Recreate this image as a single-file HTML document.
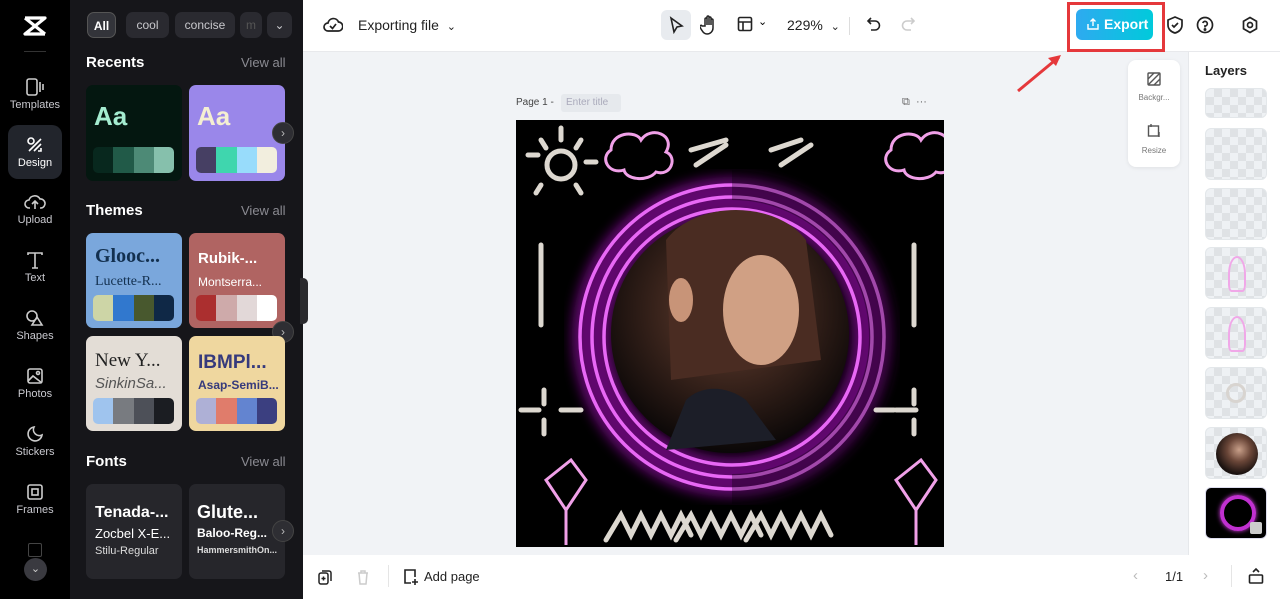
<!DOCTYPE html>
<html><head><meta charset="utf-8"><style>
*{box-sizing:border-box;margin:0;padding:0}
body{width:1280px;height:599px;overflow:hidden;font-family:"Liberation Sans",sans-serif;background:#f1f3f6;position:relative}
.abs{position:absolute}
.rail{left:0;top:0;width:70px;height:599px;background:#000}
.panel{left:70px;top:0;width:233px;height:599px;background:#16161a}
.ri{position:absolute;left:0;width:70px;text-align:center;color:#c9c9cf;font-size:11px}
.ri svg{display:block;margin:0 auto 3px}
.chip{position:absolute;top:12px;height:26px;border-radius:7px;background:#2a2a30;color:#c8c8cc;font-size:12px;line-height:26px;text-align:center}
.h{position:absolute;left:86px;color:#fff;font-weight:bold;font-size:15px}
.va{position:absolute;left:241px;color:#8b8b92;font-size:13px}
.card{position:absolute;width:96px;border-radius:7px;overflow:hidden}
.sw{position:absolute;left:7px;width:81px;height:26px;border-radius:5px;overflow:hidden;display:flex}
.sw i{flex:1}
.arr{position:absolute;width:22px;height:22px;border-radius:50%;background:#2e2e33;border:1px solid #444;color:#bbb;font-size:12px;line-height:20px;text-align:center}
.top{left:303px;top:0;width:977px;height:52px;background:#fff;border-bottom:1px solid #e8e9ec}
.bot{left:303px;top:555px;width:977px;height:44px;background:#fff}
.layers{left:1188px;top:52px;width:92px;height:503px;background:#fff;border-left:1px solid #e6e8eb}
.th{position:absolute;left:16px;width:62px;height:52px;border-radius:6px;background:#eef1f4;border:1px solid #e3e7ea;overflow:hidden;
background-image:linear-gradient(45deg,#dfe2e5 25%,transparent 25%,transparent 75%,#dfe2e5 75%),linear-gradient(45deg,#dfe2e5 25%,transparent 25%,transparent 75%,#dfe2e5 75%);background-size:16px 16px;background-position:0 0,8px 8px}
</style></head><body>
<div class="abs rail">
 <svg class="abs" style="left:22px;top:15px" width="26" height="22" viewBox="0 0 26 22"><path d="M3 3h20L3 19h20M3 3l20 16" fill="none" stroke="#fff" stroke-width="3.2" stroke-linejoin="round"/></svg>
 <div class="abs" style="left:24px;top:51px;width:22px;height:1px;background:#333"></div>
 <div class="ri" style="top:78px"><svg width="20" height="18" viewBox="0 0 20 18" fill="none" stroke="#ccc" stroke-width="1.6"><rect x="2" y="1" width="10" height="16" rx="2"/><path d="M15 4v10M18 6v6"/></svg>Templates</div>
 <div class="abs" style="left:8px;top:125px;width:54px;height:54px;border-radius:10px;background:#22252c"></div>
 <div class="ri" style="top:136px;color:#fff"><svg width="18" height="18" viewBox="0 0 18 18" fill="none" stroke="#fff" stroke-width="1.6"><circle cx="5" cy="5" r="3"/><path d="M3 15l12-12M8 15l7-7M15 12v3h-3"/></svg>Design</div>
 <div class="ri" style="top:193px"><svg width="22" height="18" viewBox="0 0 22 18" fill="none" stroke="#ccc" stroke-width="1.6"><path d="M6 15H5a4 4 0 0 1 0-8 6 6 0 0 1 11-1 4.5 4.5 0 0 1 1 9h-1M11 16V8M8 11l3-3 3 3"/></svg>Upload</div>
 <div class="ri" style="top:251px"><svg width="18" height="18" viewBox="0 0 18 18" fill="none" stroke="#ccc" stroke-width="1.6"><path d="M2 4V2h14v2M9 2v15M6 17h6"/></svg>Text</div>
 <div class="ri" style="top:309px"><svg width="20" height="18" viewBox="0 0 20 18" fill="none" stroke="#ccc" stroke-width="1.6"><circle cx="7" cy="7" r="5"/><path d="M12 8l5 8H7z"/></svg>Shapes</div>
 <div class="ri" style="top:367px"><svg width="18" height="18" viewBox="0 0 18 18" fill="none" stroke="#ccc" stroke-width="1.6"><rect x="2" y="2" width="14" height="14" rx="2"/><path d="M2 14l5-5 9 7"/><circle cx="12" cy="6" r="1.5"/></svg>Photos</div>
 <div class="ri" style="top:425px"><svg width="18" height="18" viewBox="0 0 18 18" fill="none" stroke="#ccc" stroke-width="1.6"><path d="M16 10A7 7 0 1 1 8 2a6 6 0 0 0 8 8z"/></svg>Stickers</div>
 <div class="ri" style="top:483px"><svg width="18" height="18" viewBox="0 0 18 18" fill="none" stroke="#ccc" stroke-width="1.6"><rect x="2" y="2" width="14" height="14" rx="2"/><rect x="6" y="6" width="6" height="6"/></svg>Frames</div>
 <div class="abs" style="left:28px;top:543px;width:14px;height:14px;border:1.5px solid #444;border-radius:2px"></div>
 <div class="abs" style="left:24px;top:558px;width:23px;height:23px;border-radius:50%;background:#3a3a40;color:#ccc;font-size:11px;text-align:center;line-height:22px">⌄</div>
</div>
<div class="abs panel">
 <div class="chip" style="left:17px;width:29px;background:#33343a;border:1px solid #555;color:#fff;font-weight:bold">All</div>
 <div class="chip" style="left:56px;width:43px">cool</div>
 <div class="chip" style="left:105px;width:60px">concise</div>
 <div class="chip" style="left:170px;width:22px;color:#555">m</div>
 <div class="chip" style="left:197px;width:25px">⌄</div>
</div>
<div class="h" style="top:54px">Recents</div><div class="va" style="top:55px">View all</div>
<div class="card" style="left:86px;top:85px;height:96px;background:#041710"><div style="position:absolute;left:8px;top:16px;font-size:26px;font-weight:bold;color:#a4ecd0">Aa</div><div class="sw" style="top:62px"><i style="background:#08281e"></i><i style="background:#215a48"></i><i style="background:#4d8a76"></i><i style="background:#86c0ac"></i></div></div>
<div class="card" style="left:189px;top:85px;height:96px;background:#9a87ea"><div style="position:absolute;left:8px;top:16px;font-size:26px;font-weight:bold;color:#f5efd2">Aa</div><div class="sw" style="top:62px"><i style="background:#463f63"></i><i style="background:#3fd6ae"></i><i style="background:#98dcfb"></i><i style="background:#f2eede"></i></div></div>
<div class="arr" style="left:272px;top:122px">›</div>
<div class="h" style="top:202px">Themes</div><div class="va" style="top:203px">View all</div>
<div class="card" style="left:86px;top:233px;height:95px;background:#7aa7dc"><div style="position:absolute;left:9px;top:12px;font:bold 20px 'Liberation Serif',serif;color:#13304f">Glooc...</div><div style="position:absolute;left:9px;top:41px;font:14px 'Liberation Serif',serif;color:#13304f">Lucette-R...</div><div class="sw" style="top:62px"><i style="background:#cdd5a6"></i><i style="background:#3178ce"></i><i style="background:#48582e"></i><i style="background:#0f2846"></i></div></div>
<div class="card" style="left:189px;top:233px;height:95px;background:#b06462"><div style="position:absolute;left:9px;top:17px;font:bold 15px 'Liberation Sans',sans-serif;color:#fff">Rubik-...</div><div style="position:absolute;left:9px;top:42px;font:12px 'Liberation Sans',sans-serif;color:#fff">Montserra...</div><div class="sw" style="top:62px"><i style="background:#ab2f2f"></i><i style="background:#ceaaaa"></i><i style="background:#e2d8d8"></i><i style="background:#fff"></i></div></div>
<div class="arr" style="left:272px;top:321px">›</div>
<div class="card" style="left:86px;top:336px;height:95px;background:#e3ddd6"><div style="position:absolute;left:9px;top:14px;font:19px 'Liberation Serif',serif;color:#222">New Y...</div><div style="position:absolute;left:9px;top:39px;font:italic 15px 'Liberation Sans',sans-serif;color:#555">SinkinSa...</div><div class="sw" style="top:62px"><i style="background:#9fc4ee"></i><i style="background:#787b80"></i><i style="background:#4d5058"></i><i style="background:#1b1d22"></i></div></div>
<div class="card" style="left:189px;top:336px;height:95px;background:#efd79f"><div style="position:absolute;left:9px;top:16px;font:bold 19px 'Liberation Sans',sans-serif;color:#363a7c">IBMPl...</div><div style="position:absolute;left:9px;top:42px;font:bold 12px 'Liberation Sans',sans-serif;color:#363a7c">Asap-SemiB...</div><div class="sw" style="top:62px"><i style="background:#aeb0d6"></i><i style="background:#e07c6b"></i><i style="background:#6384d0"></i><i style="background:#3b3f80"></i></div></div>
<div class="h" style="top:453px">Fonts</div><div class="va" style="top:454px">View all</div>
<div class="card" style="left:86px;top:484px;height:95px;background:#26262b;color:#fff"><div style="position:absolute;left:9px;top:20px;font:bold 16px 'Liberation Sans';">Tenada-...</div><div style="position:absolute;left:9px;top:42px;font:13px 'Liberation Sans'">Zocbel X-E...</div><div style="position:absolute;left:9px;top:61px;font:11px 'Liberation Sans';color:#ddd">Stilu-Regular</div></div>
<div class="card" style="left:189px;top:484px;height:95px;background:#26262b;color:#fff"><div style="position:absolute;left:8px;top:18px;font:bold 18px 'Liberation Sans';">Glute...</div><div style="position:absolute;left:8px;top:42px;font:bold 12px 'Liberation Sans'">Baloo-Reg...</div><div style="position:absolute;left:8px;top:61px;font:bold 9px 'Liberation Sans';color:#ddd">HammersmithOn...</div></div>
<div class="arr" style="left:272px;top:520px">›</div>
<div class="abs" style="left:300px;top:278px;width:8px;height:46px;background:#2a2a2e;border-radius:0 5px 5px 0"></div>

<div class="abs top">
 <svg class="abs" style="left:20px;top:16px" width="20" height="18" viewBox="0 0 20 18" fill="none" stroke="#222" stroke-width="1.7"><path d="M5 15a4 4 0 0 1 0-8 5.5 5.5 0 0 1 10.5-1A4.5 4.5 0 0 1 15 15z"/><path d="M7 10l2.5 2.5L13 8"/></svg>
 <div class="abs" style="left:55px;top:17px;font-size:14px;color:#222">Exporting file &nbsp;<span style="font-size:11px">⌄</span></div>
 <div class="abs" style="left:358px;top:10px;width:30px;height:30px;border-radius:6px;background:#e8ebef"></div>
 <svg class="abs" style="left:365px;top:16px" width="16" height="18" viewBox="0 0 16 18" fill="none" stroke="#222" stroke-width="1.6"><path d="M3 2l11 8-5 1-3 5z"/></svg>
 <svg class="abs" style="left:397px;top:15px" width="18" height="20" viewBox="0 0 18 20" fill="none" stroke="#222" stroke-width="1.5"><path d="M5 11V4a1 1 0 0 1 2 0v6V2a1 1 0 0 1 2 0v8V3a1 1 0 0 1 2 0v7V5a1 1 0 0 1 2 0v8a6 6 0 0 1-6 6c-3 0-4-2-6-5l-1-2a1 1 0 0 1 2-1z"/></svg>
 <svg class="abs" style="left:434px;top:16px" width="16" height="16" viewBox="0 0 16 16" fill="none" stroke="#222" stroke-width="1.6"><rect x="1.5" y="1.5" width="13" height="13" rx="1.5"/><path d="M1.5 6h13M6 6v8.5"/></svg>
 <div class="abs" style="left:455px;top:15px;font-size:11px">⌄</div>
 <div class="abs" style="left:484px;top:17px;font-size:14px;color:#222">229% &nbsp;<span style="font-size:11px">⌄</span></div>
 <div class="abs" style="left:546px;top:17px;width:1px;height:18px;background:#ddd"></div>
 <svg class="abs" style="left:563px;top:16px" width="16" height="16" viewBox="0 0 16 16" fill="none" stroke="#222" stroke-width="1.6"><path d="M5 2L2 5l3 3M2 5h7a4.5 4.5 0 0 1 0 9H5"/></svg>
 <svg class="abs" style="left:597px;top:16px" width="16" height="16" viewBox="0 0 16 16" fill="none" stroke="#ccc" stroke-width="1.6"><path d="M11 2l3 3-3 3M14 5H7a4.5 4.5 0 0 0 0 9h4"/></svg>
 <div class="abs" style="left:764px;top:2px;width:98px;height:50px;border:3px solid #e5383b"></div>
 <div class="abs" style="left:773px;top:9px;width:77px;height:31px;border-radius:6px;background:linear-gradient(90deg,#2eaaf0,#00cadb);color:#fff;font-weight:bold;font-size:14px;line-height:31px;padding-left:28px">Export</div>
 <svg class="abs" style="left:783px;top:17px" width="14" height="14" viewBox="0 0 14 14" fill="none" stroke="#fff" stroke-width="1.4"><path d="M2 7v5h10V7M7 9V2M4.5 4.5L7 2l2.5 2.5"/></svg>
 <svg class="abs" style="left:863px;top:15px" width="18" height="20" viewBox="0 0 18 20" fill="none" stroke="#222" stroke-width="1.7"><path d="M9 2l7 3v5c0 4-3 7-7 8-4-1-7-4-7-8V5z"/><path d="M6 10l2 2 4-4"/></svg>
 <svg class="abs" style="left:893px;top:16px" width="18" height="18" viewBox="0 0 18 18" fill="none" stroke="#222" stroke-width="1.7"><circle cx="9" cy="9" r="7.5"/><path d="M6.8 7a2.3 2.3 0 1 1 2.2 3v1.5"/><circle cx="9" cy="13.5" r=".6" fill="#222"/></svg>
 <svg class="abs" style="left:938px;top:16px" width="18" height="18" viewBox="0 0 18 18" fill="none" stroke="#222" stroke-width="1.7"><path d="M9 1.5l6.5 3.75v7.5L9 16.5l-6.5-3.75v-7.5z"/><circle cx="9" cy="9" r="2.5"/></svg>
</div>
<svg class="abs" style="left:1015px;top:52px" width="50" height="42" viewBox="0 0 50 42"><path d="M3 39L44 5" stroke="#e5383b" stroke-width="3"/><path d="M46 3l-13 3 8 8z" fill="#e5383b"/></svg>

<div class="abs" style="left:1128px;top:60px;width:52px;height:107px;background:#fff;border-radius:8px;box-shadow:0 1px 4px rgba(0,0,0,.08)">
 <svg class="abs" style="left:19px;top:12px" width="14" height="14" viewBox="0 0 14 14" fill="none" stroke="#555" stroke-width="1.4"><rect x="1" y="1" width="12" height="12" rx="1"/><path d="M1 7l6-6M1 13l12-12M7 13l6-6"/></svg>
 <div class="abs" style="left:0;top:33px;width:52px;text-align:center;font-size:8px;color:#777">Backgr...</div>
 <svg class="abs" style="left:19px;top:64px" width="14" height="14" viewBox="0 0 14 14" fill="none" stroke="#555" stroke-width="1.4"><rect x="1.5" y="2" width="10" height="10"/><path d="M4 0v3M12 8v5"/></svg>
 <div class="abs" style="left:0;top:86px;width:52px;text-align:center;font-size:8px;color:#777">Resize</div>
</div>

<div class="abs" style="left:516px;top:97px;font-size:10px;color:#444">Page 1 -</div>
<div class="abs" style="left:561px;top:94px;width:60px;height:18px;background:#e6e9ed;border-radius:3px;font-size:10px;color:#aab;line-height:18px;padding-left:5px">Enter title</div>
<div class="abs" style="left:902px;top:96px;font-size:11px;color:#666">⧉ &nbsp;···</div>

<svg class="abs" style="left:516px;top:120px" width="428" height="427" viewBox="0 0 428 427">
 <defs>
  <radialGradient id="fg" cx="50%" cy="40%" r="60%"><stop offset="0" stop-color="#6a4434"/><stop offset=".5" stop-color="#3a241c"/><stop offset="1" stop-color="#0a0707"/></radialGradient>
  <filter id="gl"><feGaussianBlur stdDeviation="6"/></filter>
 </defs>
 <rect width="428" height="427" fill="#000"/>
 <circle cx="216" cy="217" r="140" fill="none" stroke="#b010c8" stroke-width="40" opacity=".55" filter="url(#gl)"/>
 <g fill="none" stroke="#e868f5" stroke-width="3.5">
  <circle cx="216" cy="217" r="128"/><circle cx="216" cy="217" r="140"/><circle cx="216" cy="217" r="152"/>
 </g>
 <path d="M216 65a152 152 0 0 1 0 304" fill="none" stroke="#000" stroke-width="30" opacity=".3"/>
 <circle cx="214" cy="214" r="119" fill="url(#fg)"/>
 <path d="M150 120c30-40 110-40 140 0l15 120-150 20z" fill="#4a2c22"/>
 <ellipse cx="245" cy="190" rx="38" ry="55" fill="#d0a084"/>
 <ellipse cx="165" cy="180" rx="12" ry="22" fill="#c89478"/>
 <path d="M170 280c15-15 40-15 60 0l30 40-110 10z" fill="#1c1e28"/>
 <g fill="none" stroke="#f0a0e8" stroke-width="3">
  <path d="M95 30c0-18 25-20 30-10 10-15 35-5 25 12 12 5 5 25-10 20-8 10-30 8-32-2-15 5-25-12-13-20z"/>
  <path d="M375 30c0-18 25-20 30-10 10-15 35-5 25 12 12 5 5 25-10 20-8 10-30 8-32-2-15 5-25-12-13-20z"/>
  <path d="M30 360l20 30 20-30-15-20zM50 390v35M380 360l20 30 20-30-15-20zM400 390v35"/>
 </g>
 <g fill="none" stroke="#ddd8d0" stroke-width="5" stroke-linecap="round">
  <circle cx="45" cy="45" r="14"/><path d="M25 20l5 8M45 8v12M65 20l-5 8M12 35h10M70 42h10M25 65l-5 8M60 65l5 8"/>
  <path d="M175 30l35-10M180 45l30-20M255 30l30-10M265 45l30-20"/>
  <path d="M25 125v80M398 125v80M28 270v14M28 300v14M5 290h18M45 290h20M398 270v14M398 300v14M360 290h18M380 290h20"/>
  <path d="M90 420l15-25 10 20 10-20 10 20 10-20 10 20 10-20 10 20M160 420l15-25 10 20 10-20 10 20 10-20 10 20 10-20 10 20M230 420l15-25 10 20 10-20 10 20 10-20 10 20 10-20 10 20"/>
 </g>
</svg>

<div class="abs layers">
 <div class="abs" style="left:16px;top:11px;font-size:13px;font-weight:bold;color:#222">Layers</div>
 <div class="th" style="top:36px;height:30px"></div>
 <div class="th" style="top:76px"></div>
 <div class="th" style="top:136px"></div>
 <div class="th" style="top:195px"><div style="position:absolute;left:22px;top:8px;width:18px;height:36px;border:2px solid #f0a8e8;border-radius:50% 50% 20% 20%"></div></div>
 <div class="th" style="top:255px"><div style="position:absolute;left:22px;top:8px;width:18px;height:36px;border:2px solid #f0a8e8;border-radius:50% 50% 20% 20%"></div></div>
 <div class="th" style="top:315px"><div style="position:absolute;left:20px;top:15px;width:20px;height:20px;border:3px solid #d8d4d0;border-radius:50%"></div></div>
 <div class="th" style="top:375px"><div style="position:absolute;left:10px;top:5px;width:42px;height:42px;border-radius:50%;background:radial-gradient(circle at 55% 40%,#c9a08a 0,#6a4638 35%,#1a1210 70%)"></div></div>
 <div class="th" style="top:435px;background:#000;border-color:#dde"><div style="position:absolute;left:14px;top:7px;width:36px;height:36px;border:4px solid #c030d0;border-radius:50%;box-shadow:0 0 5px #e040f0"></div><div style="position:absolute;right:4px;bottom:4px;width:12px;height:12px;background:#ccc;border-radius:2px"></div></div>
</div>

<div class="abs bot">
 <svg class="abs" style="left:15px;top:14px" width="14" height="16" viewBox="0 0 14 16" fill="none" stroke="#222" stroke-width="1.5"><rect x="1" y="4" width="9" height="11" rx="2"/><path d="M4 2h7a2 2 0 0 1 2 2v8M5.5 7.5v4M3.5 9.5h4"/></svg>
 <svg class="abs" style="left:53px;top:14px" width="14" height="16" viewBox="0 0 14 16" fill="none" stroke="#ccc" stroke-width="1.5"><path d="M2 4h10M5 4V2h4v2M3 4l1 11h6l1-11"/></svg>
 <div class="abs" style="left:85px;top:10px;width:1px;height:22px;background:#e5e5e5"></div>
 <svg class="abs" style="left:99px;top:13px" width="18" height="18" viewBox="0 0 18 18" fill="none" stroke="#222" stroke-width="1.6"><path d="M9 15H3V2h10v7M13 11v6M10 14h6"/></svg>
 <div class="abs" style="left:121px;top:14px;font-size:13px;color:#222">Add page</div>
 <div class="abs" style="left:830px;top:12px;font-size:15px;color:#bbb">‹</div>
 <div class="abs" style="left:862px;top:14px;font-size:13px;color:#222">1/1</div>
 <div class="abs" style="left:900px;top:12px;font-size:15px;color:#bbb">›</div>
 <div class="abs" style="left:928px;top:10px;width:1px;height:22px;background:#e5e5e5"></div>
 <svg class="abs" style="left:945px;top:12px" width="16" height="18" viewBox="0 0 16 18" fill="none" stroke="#222" stroke-width="1.6"><rect x="1.5" y="8" width="13" height="8" rx="1"/><path d="M5 5l3-3 3 3"/></svg>
</div>
</body></html>
